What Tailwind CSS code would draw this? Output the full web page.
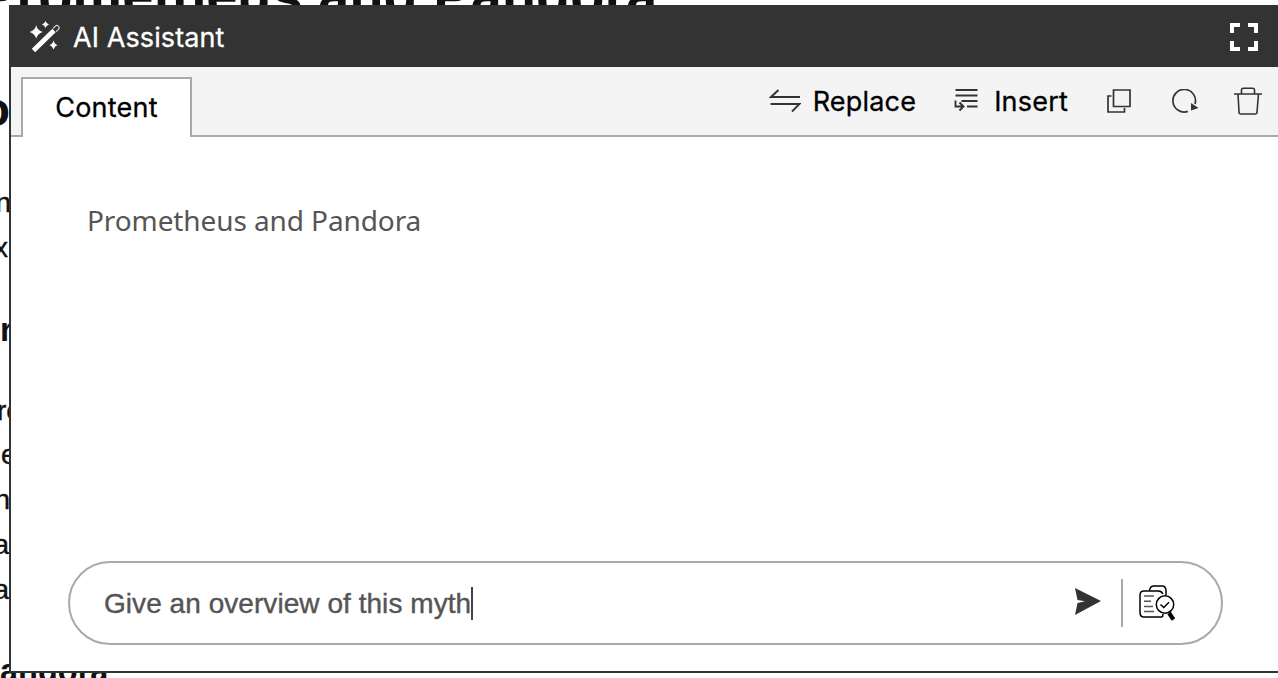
<!DOCTYPE html>
<html lang="en">
<head>
<meta charset="utf-8">
<title>AI Assistant</title>
<script src="https://cdn.jsdelivr.net/npm/@tailwindcss/browser@4"></script>
</head>
<body class="relative h-[678px] w-[1278px] overflow-hidden bg-white font-['Liberation_Sans',sans-serif] text-[#111]">
  <!-- Document under the dialog -->
  <main class="flex h-[678px] flex-col whitespace-nowrap">
    <h1 class="-mt-[34px] -ml-[21px] h-[60px] shrink-0 text-[56px] leading-[60px] font-bold">Prometheus and Pandora</h1>
    <h2 class="mt-[59px] flex h-[50px] w-[10px] shrink-0 justify-end text-[48px] leading-[50px] font-bold">o</h2>
    <p class="mt-[45px] flex h-[45px] w-[11px] shrink-0 justify-end text-[28px] leading-[45px] [-webkit-text-stroke:0.4px]">n</p>
    <p class="flex h-[45px] w-[8px] shrink-0 justify-end text-[28px] leading-[45px] [-webkit-text-stroke:0.4px]">x</p>
    <h3 class="mt-[37px] h-[45px] shrink-0 text-[33px] leading-[45px] font-bold">r</h3>
    <p class="mt-[36px] -ml-[3px] h-[45px] shrink-0 text-[28px] leading-[45px] [-webkit-text-stroke:0.4px]">re</p>
    <p class="-mt-px ml-px h-[45px] shrink-0 text-[28px] leading-[45px] [-webkit-text-stroke:0.4px]">e</p>
    <p class="flex h-[45px] w-[10px] shrink-0 justify-end text-[28px] leading-[45px] [-webkit-text-stroke:0.4px]">n</p>
    <p class="flex h-[45px] w-[9px] shrink-0 justify-end text-[28px] leading-[45px] [-webkit-text-stroke:0.4px]">a</p>
    <p class="flex h-[45px] w-[9px] shrink-0 justify-end text-[28px] leading-[45px] [-webkit-text-stroke:0.4px]">a</p>
    <h3 class="mt-[37px] h-[45px] shrink-0 text-[32.5px] leading-[45px] font-bold">andora</h3>
  </main>

  <!-- Dialog -->
  <section class="absolute top-[5px] left-[9px] flex h-[668px] w-[1269px] flex-col border-b-2 border-l-2 border-[#333] bg-white">
    <header class="-ml-0.5 flex h-[62px] shrink-0 items-center bg-[#333] pr-[19px] pl-5 text-white">
      <svg class="mt-0.5 h-8 w-8" viewBox="0 0 32 32" fill="none">
        <path d="M4.500 29.500L25 9.500" stroke="#fff" stroke-width="4.800"/>
        <path d="M24 7.600L26.500 5Q28 3.800 29.500 5.300Q31 6.800 29.600 8.200L27 10.800" stroke="#d0d0d0" stroke-width="1.200"/>
        <path d="M7.200 4.200Q8.400 9.500 13.800 11Q8.400 12.500 7.200 18Q6 12.500 0.500 11Q6 9.500 7.200 4.200ZM16.500 0Q17.300 2.700 20 3.500Q17.300 4.300 16.500 7Q15.700 4.300 13 3.500Q15.700 2.700 16.500 0ZM24.500 19.500Q25.500 23.200 28.500 24Q25.500 25 24.500 28.500Q23.500 25 20.500 24Q23.500 23.200 24.500 19.500Z" fill="#fff"/>
      </svg>
      <h2 class="mt-[3px] ml-3 font-[Inter,sans-serif] text-[27px] leading-8 tracking-[0.1px] [-webkit-text-stroke:0.3px]">AI Assistant</h2>
      <svg class="mt-0.5 ml-auto h-7 w-7.5" viewBox="0 0 30 28" fill="none" stroke="#fff" stroke-width="4">
        <path d="M3 10V2H11M19 2H27V10M3 18V26H11M19 26H27V18"/>
      </svg>
    </header>

    <div class="relative flex h-[70px] shrink-0 border-b-2 border-[#a9a9a9] bg-[#f4f4f4] font-[Inter,sans-serif] text-[27px] tracking-[0.2px] text-black [-webkit-text-stroke:0.3px]">
      <div class="mt-2.5 ml-2.5 -mb-0.5 flex w-[171px] shrink-0 items-center justify-center border-2 border-b-0 border-[#a9a9a9] bg-white">Content</div>
      <div class="ml-auto flex h-[68px] items-center pr-4">
        <svg class="h-6 w-8" viewBox="0 0 32 24" fill="none" stroke="#333" stroke-width="1.900">
          <path d="M9.500 1L2 8H31M1.500 15H30.500L23 22.500"/>
        </svg>
        <span class="mt-0.5 ml-3">Replace</span>
        <svg class="-mt-[3px] ml-[38px] h-6 w-6" viewBox="0 0 24 24" fill="none" stroke="#333" stroke-width="1.900">
          <path d="M1.500 2H23.500M1.500 7.500H23.500M7.500 13H23.500M13 18.500H23.500M1.500 12.500V18.500H8.500M5.500 14.500L9.500 18.500L5.500 22.500"/>
        </svg>
        <span class="mt-0.5 ml-4">Insert</span>
        <svg class="ml-[39px] h-6 w-6" viewBox="0 0 24 24" fill="none" stroke="#333" stroke-width="1.700">
          <path d="M6.500 1H23V17.500H6.500ZM4.500 7H1V23H17.500V19"/>
        </svg>
        <svg class="ml-[40px] h-6 w-7" viewBox="0 0 28 24" fill="none">
          <path d="M16.800 22.400A11.300 11.300 0 1 1 24 15" stroke="#333" stroke-width="1.700"/>
          <path d="M20 14V21.500L27.500 19Z" fill="#333"/>
        </svg>
        <svg class="ml-[35px] h-7 w-7" viewBox="0 0 28 28" fill="none" stroke="#333" stroke-width="1.600">
          <path d="M0 7H28M4 7L5 25Q5 27 7 27H21Q23 27 23 25L24.500 7M7.500 7V3Q7.500 1.200 9.300 1.200H18.700Q20.500 1.200 20.500 3V7"/>
        </svg>
      </div>
    </div>

    <div class="flex flex-1 flex-col pr-[55px] pb-[26px] pl-[57px]">
      <p class="mt-[63px] ml-[19px] font-['Noto_Sans',sans-serif] text-[28px] leading-10 tracking-[-0.1px] text-[#555]">Prometheus and Pandora</p>
      <div class="mt-auto flex h-[84px] items-center rounded-full border-2 border-[#a9a9a9] pr-[46px] pl-[34px] text-[#555]">
        <span class="mt-px text-[28px] leading-8 tracking-[0.05px] [-webkit-text-stroke:0.4px]">Give an overview of this myth</span>
        <span class="h-[33px] w-0.5 bg-[#444]"></span>
        <svg class="-mt-0.5 ml-auto h-7 w-[26px]" viewBox="0 0 26 28">
          <path d="M0 0L26 13L0 27L2.500 15L10 13.300L2.500 12Z" fill="#333"/>
        </svg>
        <span class="ml-5 h-12 w-0.5 bg-[#a9a9a9]"></span>
        <svg class="ml-4 h-9 w-9" viewBox="0 0 36 36" fill="none" stroke="#000" stroke-width="1.500">
          <path d="M23.500 32H5Q1 32 1 27.500V10Q1 6 5 6H19.500Q22.500 6 24 9M10.500 5.500Q11 1 15 1H23Q27 1 27 6V10M23.500 32L24 29"/>
          <path d="M5 11H15M5 16.300H12M5 21.500H14M5 26.500H15" stroke="#555"/>
          <circle cx="26" cy="19.500" r="8.700"/>
          <path d="M21.500 19.500L24.800 22.500L30 17.300"/>
          <path d="M30 28L34.500 34.500" stroke-width="4.200"/>
        </svg>
      </div>
    </div>
  </section>
</body>
</html>
